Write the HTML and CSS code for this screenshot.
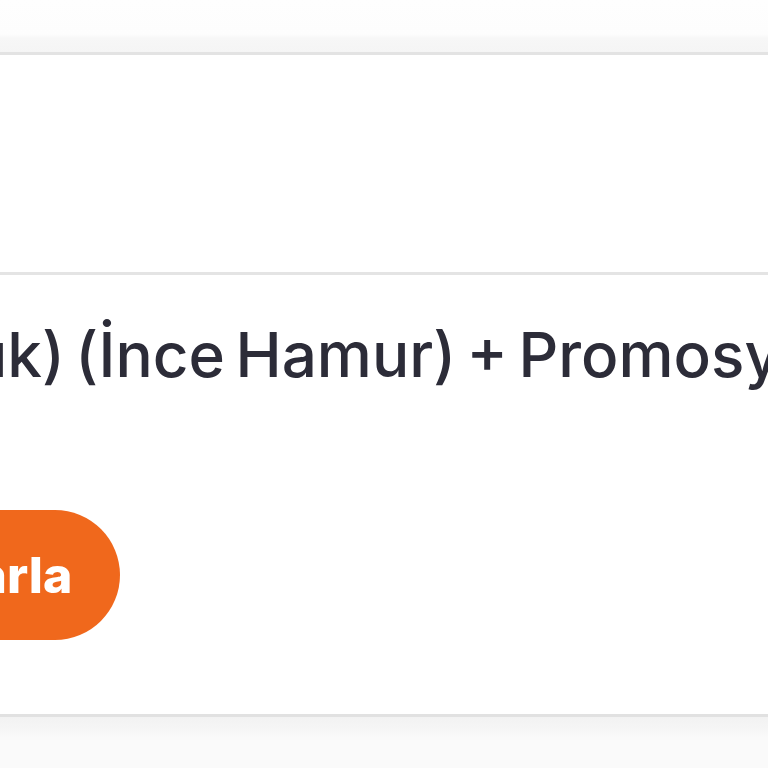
FILE: index.html
```html
<!DOCTYPE html>
<html lang="tr">
<head>
<meta charset="utf-8">
<title>Sipariş</title>
<link rel="stylesheet" href="styles.css">
</head>
<body>
<div class="page">
  <div class="top-band"></div>
  <section class="order-card">
    <div class="order-head"></div>
    <div class="order-body">
      <p class="order-title">ük) (İnce Hamur) + Promosyon</p>
      <div class="order-actions">
        <button class="btn-repeat" type="button">Tekrarla</button>
      </div>
    </div>
  </section>
  <div class="bottom-band"></div>
</div>
</body>
</html>
```

FILE: styles.css
```css
* { box-sizing: border-box; }
html, body { margin: 0; padding: 0; }
body {
  width: 768px;
  height: 768px;
  overflow: hidden;
  background: #fafafa;
  font-family: "Inter", "Open Sans", sans-serif;
}
.page {
  display: flex;
  flex-direction: column;
  height: 768px;
}
.top-band {
  height: 52px;
  flex: none;
  background: linear-gradient(#fefefe 0, #fdfdfd 34px, #f7f7f7 38px, #f5f5f5 52px);
}
.order-card {
  flex: none;
  background: #ffffff;
  border-top: 3px solid #e3e3e3;
  border-bottom: 3px solid #e1e1e1;
}
.order-head {
  height: 220px;
  border-bottom: 3px solid #e4e4e4;
}
.order-body {
  height: 439px;
  overflow: hidden;
  display: flex;
  flex-direction: column;
}
.order-title {
  margin: 40px 0 0 -30px;
  white-space: nowrap;
  font-size: 62px;
  font-weight: 500;
  line-height: 80px;
  color: #2c2c38;
  letter-spacing: 0;
  word-spacing: -6px;
}
.order-actions {
  margin-top: 115px;
  display: flex;
}
.btn-repeat {
  margin-left: -196px;
  height: 130px;
  padding: 0 48px 0 64px;
  border: none;
  border-radius: 65px;
  background: #f0681c;
  color: #ffffff;
  font-family: "Inter", "Open Sans", sans-serif;
  font-weight: 800;
  font-size: 50px;
  line-height: 1;
  flex: none;
}
.bottom-band {
  flex: 1;
  background: linear-gradient(#f2f2f2 0, #f5f5f5 10px, #fafafa 20px, #fafafa 100%);
}
```
